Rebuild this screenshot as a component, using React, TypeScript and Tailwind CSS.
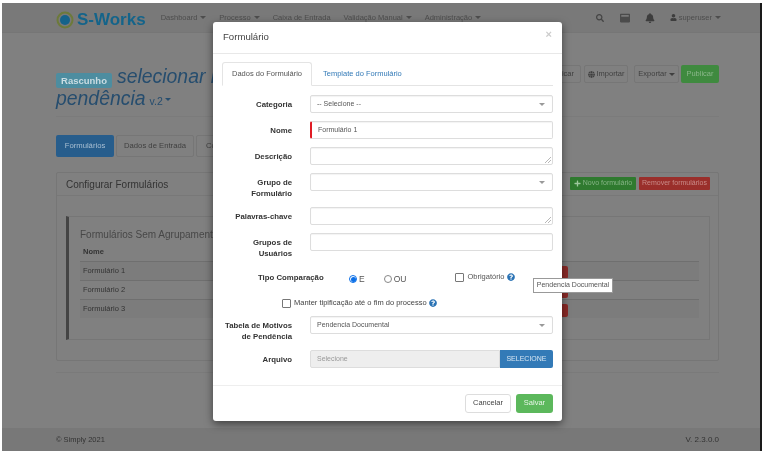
import { FaSearch, FaBell, FaUser, FaPlus, FaQuestionCircle, FaGlobe, FaWindowMaximize } from "react-icons/fa"

function Caret({ className = "" }: { className?: string }) {
  return <span className={"inline-block w-0 h-0 border-x-[3px] border-x-transparent border-t-[3px] border-t-current align-middle " + className} />
}

function NavItem({ label, caret = false }: { label: string; caret?: boolean }) {
  return (
    <span className="flex items-center gap-[3px] whitespace-nowrap">
      {label}
      {caret && <Caret />}
    </span>
  )
}

function Row({ label, children, className = "" }: { label: React.ReactNode; children: React.ReactNode; className?: string }) {
  return (
    <div className={"flex " + className}>
      <div className="w-[70px] ml-[9px] shrink-0 text-right text-[7.8px] leading-[11px] font-bold text-[#333] pt-[4px] whitespace-nowrap">{label}</div>
      <div className="ml-[18px] w-[243px]">{children}</div>
    </div>
  )
}

function Field({ children, className = "" }: { children?: React.ReactNode; className?: string }) {
  return (
    <div className={"relative h-[18px] rounded-[2px] border border-[#ddd] bg-white flex items-center px-[6px] text-[7px] text-[#555] shadow-[inset_0_1px_1px_rgba(0,0,0,0.05)] " + className}>
      {children}
    </div>
  )
}

function SelectField({ text }: { text?: string }) {
  return (
    <Field>
      <span>{text}</span>
      <Caret className="ml-auto mr-[1px] text-[#999]" />
    </Field>
  )
}

function TextArea() {
  return (
    <Field>
      <svg className="absolute right-[1px] bottom-[1px]" width="6" height="6" viewBox="0 0 6 6">
        <path d="M0 6L6 0M3 6L6 3" stroke="#999" strokeWidth="0.7" />
      </svg>
    </Field>
  )
}

function FormModal() {
  return (
    <div className="absolute left-[211px] top-[19px] w-[349px] h-[399px] bg-white rounded-[3px] shadow-[0_3px_9px_rgba(0,0,0,0.5)] flex flex-col">
      <div className="h-[32px] shrink-0 border-b border-[#e8e8e8] flex items-center px-[10px] pb-[1px] text-[9.6px] text-[#444]">
        Formulário
        <span className="ml-auto mb-[6px] text-[11px] font-bold text-[#ccc]">×</span>
      </div>
      <div className="px-[9px] pt-[8px]">
        <div className="flex h-[24px] border-b border-[#e4e4e4] text-[7.5px]">
          <div className="w-[90px] h-[24px] border border-b-white border-[#e4e4e4] rounded-t-[3px] flex items-center justify-center text-[#555] bg-white">Dados do Formulário</div>
          <div className="ml-[11px] flex items-center text-[#337ab7]">Template do Formulário</div>
        </div>
      </div>
      <div className="flex flex-col pt-[9px]">
        <Row label="Categoria" className="h-[26px]"><SelectField text="-- Selecione --" /></Row>
        <Row label="Nome" className="h-[26px]">
          <Field className="border-l-[2px] border-l-[#e01b24]">Formulário 1</Field>
        </Row>
        <Row label="Descrição" className="h-[26px]"><TextArea /></Row>
        <Row label={<>Grupo de<br />Formulário</>} className="h-[34px]"><SelectField /></Row>
        <Row label="Palavras-chave" className="h-[26px]"><TextArea /></Row>
        <Row label={<>Grupos de<br />Usuários</>} className="h-[36px]"><Field /></Row>
        <div className="flex h-[26px] text-[#555]">
          <div className="ml-[45px] w-[76px] shrink-0 text-[7.8px] leading-[11px] font-bold text-[#333] pt-[3px] whitespace-nowrap">Tipo Comparação</div>
          <div className="flex items-start text-[8.5px]">
            <div className="flex items-center gap-[2px] ml-[15px] mt-[4px]">
              <span className="w-[8px] h-[8px] rounded-full border border-[#0a6fe8] flex items-center justify-center">
                <span className="w-[5px] h-[5px] rounded-full bg-[#0a6fe8]" />
              </span>
              E
            </div>
            <div className="flex items-center gap-[2px] ml-[19px] mt-[4px]">
              <span className="w-[8px] h-[8px] rounded-full border border-[#888]" />
              OU
            </div>
            <div className="flex items-center ml-[49px] mt-[2px] text-[7.5px]">
              <span className="w-[9px] h-[9px] rounded-[1px] border border-[#777] mr-[3px] mt-[1px]" />
              Obrigatório
              <FaQuestionCircle className="ml-[2px] text-[#2a73b5] text-[8px]" />
            </div>
          </div>
        </div>
        <div className="h-[16px] flex items-center pl-[69px] text-[7.5px] font-medium text-[#444]">
          <span className="w-[9px] h-[9px] rounded-[1px] border border-[#777] mr-[3px]" />
          Manter tipificação até o fim do processo
          <FaQuestionCircle className="ml-[2px] text-[#2a73b5] text-[8px]" />
        </div>
        <Row label={<>Tabela de Motivos<br />de Pendência</>} className="h-[34px] mt-[5px]"><SelectField text="Pendencia Documental" /></Row>
        <Row label="Arquivo" className="h-[18px]">
          <div className="flex h-[18px]">
            <div className="flex-1 rounded-l-[2px] border border-[#ddd] bg-[#eee] flex items-center px-[6px] text-[7px] text-[#999]">Selecione</div>
            <div className="w-[53px] rounded-r-[2px] bg-[#337ab7] flex items-center justify-center text-[7px] font-medium text-[#d7e6f3]">SELECIONE</div>
          </div>
        </Row>
      </div>
      <div className="mt-[17px] flex-1 border-t border-[#eee] flex items-center justify-end gap-[5px] pr-[9px] pb-[1px]">
        <div className="w-[46px] h-[19px] rounded-[3px] border border-[#ddd] flex items-center justify-center text-[7.5px] text-[#444]">Cancelar</div>
        <div className="w-[37px] h-[19px] rounded-[3px] bg-[#5cb85c] flex items-center justify-center text-[7.5px] text-[#e8f5e8]">Salvar</div>
      </div>
    </div>
  )
}

export default function App() {
  return (
    <div className="h-[455px] w-[765px] bg-white overflow-hidden pl-[2px] pt-[3px] font-['Liberation_Sans',Arial,sans-serif] blur-[0.5px]">
      <div className="relative flex flex-col h-[448px] w-[760px] bg-[#808080] border-r-2 border-[#1a1a1a]">
        <header className="h-[30px] shrink-0 bg-[#797979] border-b border-[#767676] flex items-center pt-[4px] pl-[54px] pr-[39px] text-[7.5px] text-[#4d4d4d]">
          <div className="flex items-center mr-[15px]">
            <svg width="18" height="18" viewBox="0 0 18 18" className="mr-[3px]">
              <circle cx="9" cy="9" r="7.5" fill="none" stroke="#6d7a3a" strokeWidth="2" />
              <circle cx="9" cy="9" r="5" fill="#15638a" />
            </svg>
            <span className="text-[17px] font-bold text-[#14648a] leading-none">S-Works</span>
          </div>
          <div className="flex gap-[13px] mb-[4px]">
            <NavItem label="Dashboard" caret />
            <NavItem label="Processo" caret />
            <NavItem label="Caixa de Entrada" />
            <NavItem label="Validação Manual" caret />
            <NavItem label="Administração" caret />
          </div>
          <div className="ml-auto flex items-center mb-[4px]">
            <FaSearch className="text-[8px] text-[#444] mr-[16px]" />
            <FaWindowMaximize className="text-[10px] text-[#4b4b4b] mr-[15px]" />
            <FaBell className="text-[10px] text-[#3d3d3d] mr-[15px]" />
            <FaUser className="text-[7px] text-[#3d3d3d] mr-[2px]" />
            <NavItem label="superuser" caret />
          </div>
        </header>

        <main className="flex-1 pl-[54px] w-[717px]">
          <div className="relative h-[84px] border-b border-[#7b7b7b]">
            <div className="pt-[32px] text-[19.4px] italic leading-[22px] text-[#264d6e] whitespace-nowrap">
              <span className="not-italic inline-block align-[-1px] -my-[4px] w-[56px] h-[15px] mr-[5px] rounded-[2px] bg-[#4d8da0] text-center text-[9.5px] font-bold leading-[15px] text-[#c9dce2]">Rascunho</span>
              <span>selecionar motivo de</span>
              <br />
              <span>pendência</span>
              <span className="text-[10.5px] not-italic ml-[4px]">v.2</span>
              <Caret className="ml-[2px]" />
            </div>
            <div className="absolute right-0 top-[32px] flex items-center text-[7.5px] text-[#3f3f3f]">
              <div className="h-[18px] px-[6px] border border-[#767676] rounded-[2px] flex items-center mr-[3px]">Duplicar</div>
              <div className="h-[18px] w-[44px] border border-[#767676] rounded-[2px] flex items-center justify-center gap-[2px] mr-[6px]"><FaGlobe className="text-[7px]" />Importar</div>
              <div className="h-[18px] w-[45px] border border-[#767676] rounded-[2px] flex items-center justify-center gap-[2px] mr-[2px]">Exportar <Caret /></div>
              <div className="h-[18px] w-[38px] bg-[#3f8a3f] rounded-[2px] flex items-center justify-center text-[#89b689]">Publicar</div>
            </div>
          </div>

          <div className="flex gap-[2px] mt-[18px] text-[7.7px]">
            <div className="w-[58px] h-[22px] rounded-[2px] bg-[#275d8c] text-[#a9bfd2] flex items-center justify-center">Formulários</div>
            <div className="w-[78px] h-[22px] rounded-[2px] border border-[#767676] text-[#3f3f3f] flex items-center justify-center">Dados de Entrada</div>
            <div className="w-[60px] h-[22px] rounded-[2px] border border-[#767676] text-[#3f3f3f] flex items-center pl-[9px]">Configurações</div>
          </div>

          <section className="mt-[15px] h-[189px] border border-[#767676] rounded-[2px]">
            <div className="h-[23px] flex items-center pl-[9px] pr-[8px] border-b border-[#787878] text-[10px] text-[#333]">
              Configurar Formulários
              <div className="ml-auto flex gap-[3px] mt-[-1px] text-[7px]">
                <div className="h-[13px] w-[66px] bg-[#2f7a2f] rounded-[1px] flex items-center justify-center gap-[2px] text-[#86b486]"><FaPlus className="text-[7px] text-[#9fc89f]" />Novo formulário</div>
                <div className="h-[13px] w-[71px] bg-[#9a2f2b] rounded-[1px] flex items-center justify-center text-[#c98b88] whitespace-nowrap">Remover formulários</div>
              </div>
            </div>
            <div className="relative ml-[9px] mt-[20px] mr-[8px] h-[124px] border border-[#767676] border-l-[3px] border-l-[#444] pl-[11px] pr-[10px] pt-[11px]">
              <div className="text-[10px] text-[#474747] leading-[14px] whitespace-nowrap">Formulários Sem Agrupamento</div>
              <div className="h-[19px] flex items-center pl-[3px] pt-[1px] text-[7.5px] font-bold text-[#333]">Nome</div>
              <div className="relative text-[7.5px] text-[#333]">
                <div className="absolute left-[480px] top-[5px] w-[8px] h-[13px] bg-[#8b2a27] rounded-r-[2px]" />
                <div className="absolute left-[480px] top-[24px] w-[8px] h-[13px] bg-[#8b2a27] rounded-r-[2px]" />
                <div className="absolute left-[480px] top-[43px] w-[8px] h-[13px] bg-[#8b2a27] rounded-r-[2px]" />
                <div className="h-[19px] border-t border-[#6f6f6f] bg-[#7c7c7c] flex items-center px-[3px]">Formulário 1</div>
                <div className="h-[19px] border-t border-[#6f6f6f] flex items-center px-[3px]">Formulário 2</div>
                <div className="h-[19px] border-t border-[#6f6f6f] bg-[#7c7c7c] flex items-center px-[3px]">Formulário 3</div>
              </div>
            </div>
          </section>
          <div className="mt-[11px] border-t border-[#7a7a7a]" />
        </main>

        <footer className="h-[23px] shrink-0 bg-[#787878] flex items-center justify-between pl-[54px] pr-[41px] text-[7.5px] text-[#333]">
          <span>© Simply 2021</span>
          <span className="text-[8px]">V. 2.3.0.0</span>
        </footer>

        <FormModal />

        <div className="absolute left-[531px] top-[275px] w-[80px] h-[15px] bg-white border border-[#999] flex items-center justify-center text-[7px] text-[#555] whitespace-nowrap">Pendencia Documental</div>
      </div>
    </div>
  )
}
